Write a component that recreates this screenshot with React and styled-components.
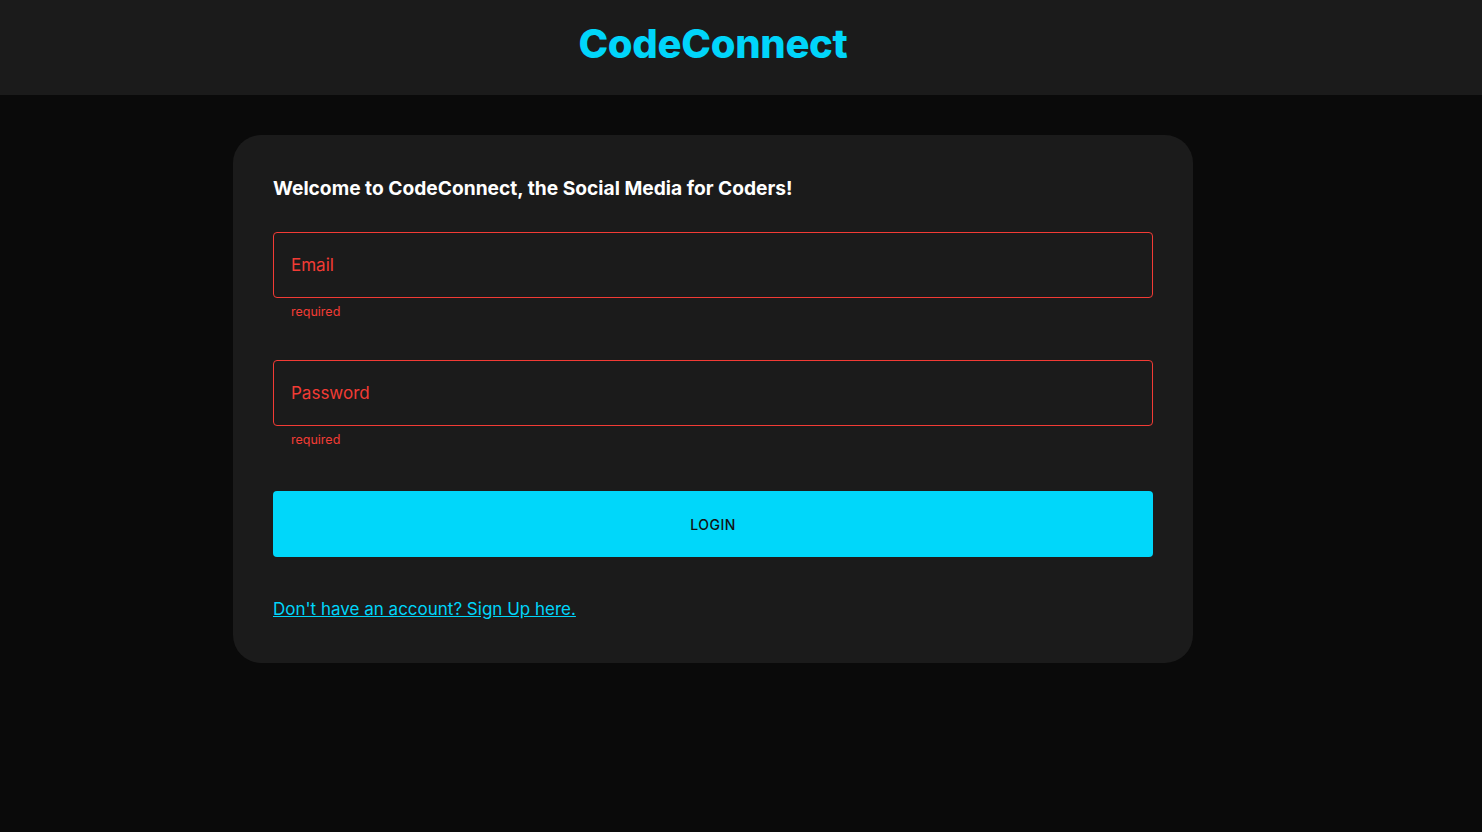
import React from 'react'
import styled, { createGlobalStyle } from 'styled-components'

const GlobalStyle = createGlobalStyle`
    * { box-sizing: border-box; }
    body {
        margin: 0;
        background: #0a0a0a;
        font-family: Inter, "Noto Sans", "Liberation Sans", sans-serif;
    }
`;

const Header = styled.header`
    height: 95px;
    background: #1b1b1b;
    display: flex;
    align-items: center;
    justify-content: center;
    padding: 0 56px 8px 0;
`;

const Logo = styled.h1`
    margin: 0;
    color: #00d5fa;
    font-size: 40px;
    font-weight: 800;
    letter-spacing: -0.3px;
`;

const Main = styled.main`
    display: flex;
    justify-content: center;
    padding: 40px 56px 0 0;
`;

const Card = styled.form`
    width: 960px;
    background: #1b1b1b;
    border-radius: 28px;
    padding: 41px 40px 44px;
    display: flex;
    flex-direction: column;
`;

const Title = styled.h2`
    margin: 0 0 32px;
    color: #fff;
    font-size: 19.2px;
    line-height: 24px;
    font-weight: 700;
    letter-spacing: 0;
`;

const Field = styled.div`
    display: flex;
    flex-direction: column;
    margin-bottom: ${p => p.$gap || 0}px;
`;

const Input = styled.input`
    height: 66px;
    width: 100%;
    background: transparent;
    border: 1px solid #f23b35;
    border-radius: 4px;
    padding: 0 17px;
    font-family: inherit;
    font-size: 17px;
    color: #fff;
    outline: none;
    &::placeholder { color: #f23b35; }
`;

const Helper = styled.span`
    color: #f23b35;
    font-size: 12.5px;
    margin: 6px 0 0 18px;
    line-height: 16px;
`;

const Button = styled.button`
    height: 66px;
    margin-top: 43px;
    border: none;
    border-radius: 4px;
    background: #00d7fa;
    color: #121212;
    font-family: inherit;
    font-size: 14px;
    font-weight: 500;
    letter-spacing: 0.5px;
`;

const SignUp = styled.a`
    margin-top: 42px;
    align-self: flex-start;
    color: #00d5fa;
    font-size: 17px;
    text-decoration: underline;
    cursor: pointer;
`;

const App = () => {
    return (
        <>
            <GlobalStyle />
            <Header>
                <Logo>CodeConnect</Logo>
            </Header>
            <Main>
                <Card onSubmit={e => e.preventDefault()}>
                    <Title>Welcome to CodeConnect, the Social Media for Coders!</Title>
                    <Field $gap={40}>
                        <Input placeholder='Email' />
                        <Helper>required</Helper>
                    </Field>
                    <Field>
                        <Input type='password' placeholder='Password' />
                        <Helper>required</Helper>
                    </Field>
                    <Button type='submit'>LOGIN</Button>
                    <SignUp>Don't have an account? Sign Up here.</SignUp>
                </Card>
            </Main>
        </>
    )
}

export default App;
